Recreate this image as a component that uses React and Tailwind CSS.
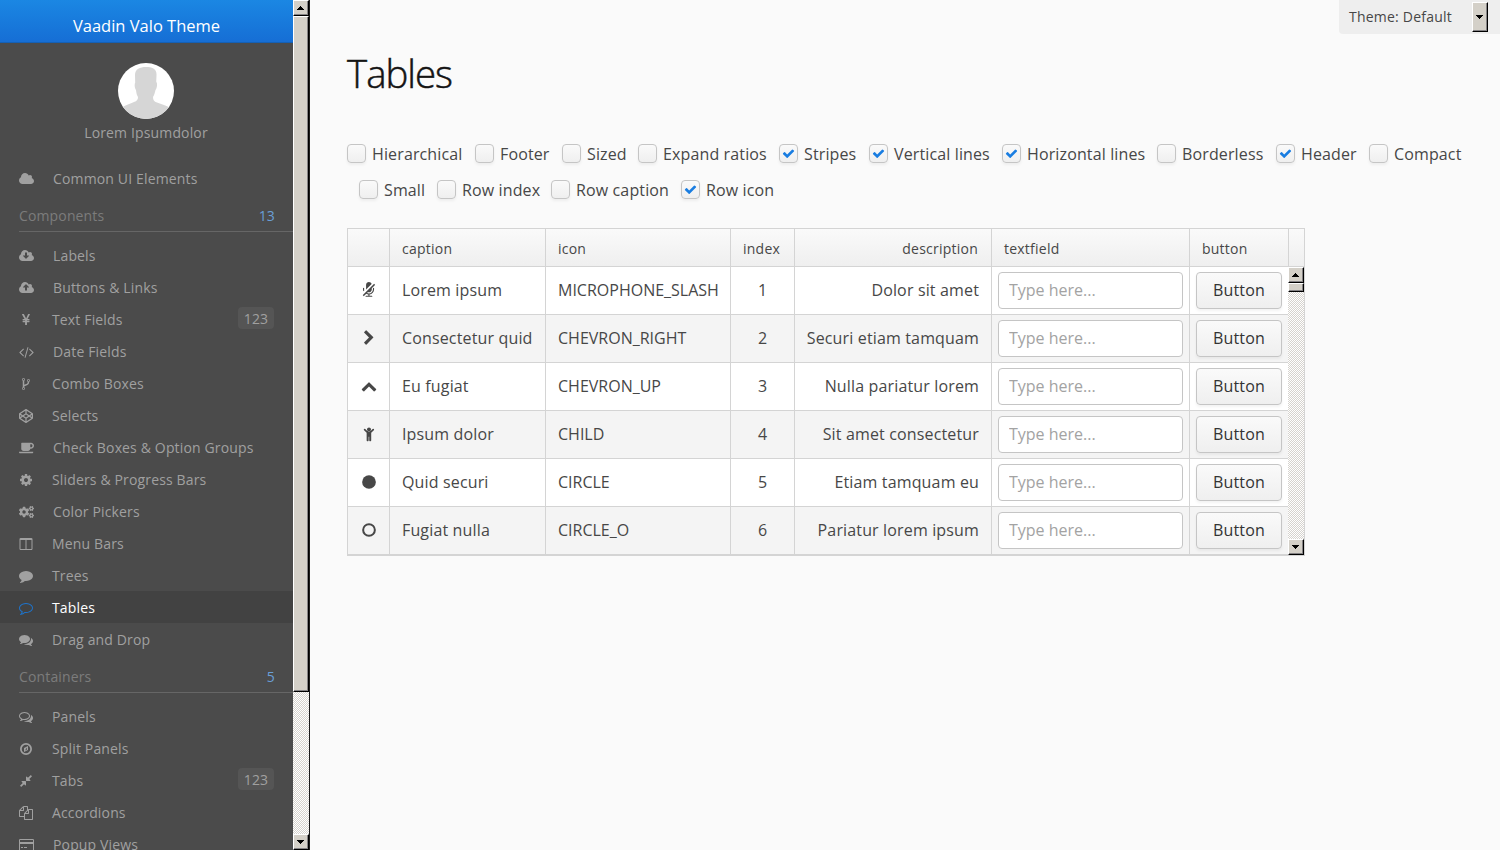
import React from "react";
import { FaCogs, FaCodepen, FaCoffee } from "react-icons/fa";

const CLOUD =
  "q0 159-112.5 271.5t-271.5 112.5h-1088q-185 0-316.5-131.5t-131.5-316.5q0-132 71-241.5t187-163.5q-2-28-2-43 0-212 150-362t362-150q158 0 286.5 88t187.5 230q70-62 166-62 106 0 181 75t75 181q0 75-41 138 129 30 213 134.5t84 239.5z";

const paths = {
  cloud: "M1984 1152" + CLOUD,
  cloudDown:
    "M1344 864q0-14-9-23t-23-9h-224v-352q0-13-9.5-22.5t-22.5-9.5h-192q-13 0-22.5 9.5t-9.5 22.5v352h-224q-13 0-22.5 9.5t-9.5 22.5q0 14 9 23l352 352q9 9 23 9t23-9l351-351q10-12 10-24zM1984 1152" + CLOUD,
  cloudUp:
    "M1344 800q0-14-9-23l-352-352q-9-9-23-9t-23 9l-351 351q-10 12-10 24 0 14 9 23t23 9h224v352q0 13 9.5 22.5t22.5 9.5h192q13 0 22.5-9.5t9.5-22.5v-352h224q13 0 22.5-9.5t9.5-22.5zM1984 1152" + CLOUD,
  yen: "M985.5 1536h-172q-13 0-22.5-9t-9.5-23v-330h-288q-13 0-22.5-9t-9.5-23v-103q0-13 9.5-22.5t22.5-9.5h288v-85h-288q-13 0-22.5-9t-9.5-23v-104q0-13 9.5-22.5t22.5-9.5h214l-321-578q-8-16 0-32 10-16 28-16h194q19 0 29 18l215 425q19 38 56 125 10-24 30.5-68t27.5-61l191-420q8-19 29-19h191q17 0 27 16 9 14 1 31l-313 579h215q13 0 22.5 9.5t9.5 22.5v104q0 14-9.5 23t-22.5 9h-290v85h290q13 0 22.5 9.5t9.5 22.5v103q0 14-9.5 23t-22.5 9h-290v330q0 13-9.5 22.5t-22.5 9.5z",
  code: "M681 1399l-50 50q-10 10-23 10t-23-10l-466-466q-10-10-10-23t10-23l466-466q10-10 23-10t23 10l50 50q10 10 10 23t-10 23l-393 393 393 393q10 10 10 23t-10 23zm591-1067l-373 1291q-4 13-15.5 19.5t-23.5 2.5l-62-17q-13-4-19.5-15.5t-2.5-24.5l373-1291q4-13 15.5-19.5t23.5-2.5l62 17q13 4 19.5 15.5t2.5 24.5zm657 651l-466 466q-10 10-23 10t-23-10l-50-50q-10-10-10-23t10-23l393-393-393-393q-10-10-10-23t10-23l50-50q10-10 23-10t23 10l466 466q10 10 10 23t-10 23z",
  fork: "M672 1472q0-40-28-68t-68-28-68 28-28 68 28 68 68 28 68-28 28-68zm0-1152q0-40-28-68t-68-28-68 28-28 68 28 68 68 28 68-28 28-68zm640 128q0-40-28-68t-68-28-68 28-28 68 28 68 68 28 68-28 28-68zm96 0q0 52-26 96.5t-70 69.5q-2 287-226 414-67 38-203 81-128 40-169.5 71t-41.5 100v26q44 25 70 69.5t26 96.5q0 80-56 136t-136 56-136-56-56-136q0-52 26-96.5t70-69.5v-820q-44-25-70-69.5t-26-96.5q0-80 56-136t136-56 136 56 56 136q0 52-26 96.5t-70 69.5v497q54-26 154-57 55-17 87.5-29.5t70.5-31 59-39.5 40.5-51 28-69.5 8.5-91.5q-44-25-70-69.5t-26-96.5q0-80 56-136t136-56 136 56 56 136z",
  cog: "M1152 896q0-106-75-181t-181-75-181 75-75 181 75 181 181 75 181-75 75-181zm512-109v222q0 12-8 23t-20 13l-185 28q-19 54-39 91 35 50 107 138 10 12 10 25t-9 23q-27 37-99 108t-94 71q-12 0-26-9l-138-108q-44 23-91 38-16 136-29 186-7 28-36 28h-222q-14 0-24.5-8.5t-11.5-21.5l-28-184q-49-16-90-37l-141 107q-10 9-25 9-14 0-25-11-126-114-165-168-7-10-7-23 0-12 8-23 15-21 51-66.5t54-70.5q-27-50-41-99l-183-27q-13-2-21-12.5t-8-23.5v-222q0-12 8-23t19-13l186-28q14-46 39-92-40-57-107-138-10-12-10-24 0-10 9-23 26-36 98.5-107.5t94.5-71.5q13 0 26 10l138 107q44-23 91-38 16-136 29-186 7-28 36-28h222q14 0 24.5 8.5t11.5 21.5l28 184q49 16 90 37l142-107q9-9 24-9 13 0 25 10 129 119 165 170 7 8 7 22 0 12-8 23-15 21-51 66.5t-54 70.5q26 50 41 98l183 28q13 2 21 12.5t8 23.5z",
  columns:
    "M224 1536h608v-1152h-640v1120q0 13 9.5 22.5t22.5 9.5zm1376-32v-1120h-640v1152h608q13 0 22.5-9.5t9.5-22.5zm128-1216v1216q0 66-47 113t-113 47h-1344q-66 0-113-47t-47-113v-1216q0-66 47-113t113-47h1344q66 0 113 47t47 113z",
  comment:
    "M1792 896q0 174-120 321.5t-326 233-450 85.5q-70 0-145-8-198 175-460 242-49 14-114 22-17 2-30.5-9t-17.5-29v-1q-3-4-.5-12t2-10 4.5-9.5l6-9 7-8.5 8-9q7-8 31-34.5t34.5-38 31-39.5 32.5-51 27-59 26-76q-157-89-247.5-220t-90.5-281q0-130 71-248.5t191-204.5 286-136.5 348-50.5q244 0 450 85.5t326 233 120 321.5z",
  commentO:
    "M896 384q-204 0-381.5 69.5t-282 187.5-104.5 255q0 112 71.5 213.5t201.5 175.5l87 50-27 96q-24 91-70 172 152-63 275-171l43-38 57 6q69 8 130 8 204 0 381.5-69.5t282-187.5 104.5-255-104.5-255-282-187.5-381.5-69.5zm896 512q0 174-120 321.5t-326 233-450 85.5q-70 0-145-8-198 175-460 242-49 14-114 22h-5q-15 0-27-10.5t-16-27.5v-1q-3-4-.5-12t2-10 4.5-9.5l6-9 7-8.5 8-9q7-8 31-34.5t34.5-38 31-39.5 32.5-51 27-59 26-76q-157-89-247.5-220t-90.5-281q0-174 120-321.5t326-233 450-85.5 450 85.5 326 233 120 321.5z",
  comments:
    "M1408 768q0 139-94 257t-256.5 186.5-353.5 68.5q-86 0-176-16-124 88-278 128-36 9-86 16h-3q-11 0-20.5-8t-11.5-21q-1-3-1-6.5t.5-6.5 2-6l2.5-5 3.5-5.5 4-5 4.5-5 4-4.5q5-6 23-25t26-29.5 22.5-29 25-38.5 20.5-44q-124-72-195-177t-71-224q0-139 94-257t256.5-186.5 353.5-68.5 353.5 68.5 256.5 186.5 94 257zm384 256q0 120-71 224.5t-195 176.5q10 24 20.5 44t25 38.5 22.5 29 26 29.5 23 25q1 1 4 4.5t4.5 5 4 5 3.5 5.5l2.5 5 2 6 .5 6.5-1 6.5q-3 14-13 22t-22 7q-50-7-86-16-154-40-278-128-90 16-176 16-271 0-472-132 58 4 88 4 161 0 309-45t264-129q125-92 192-212t67-254q0-77-23-152 129 71 204 178t75 230z",
  commentsO:
    "M704 384q-153 0-286 52t-211.5 141-78.5 191q0 82 53 158t149 132l97 56-35 84q34-20 62-39l44-31 53 10q78 14 153 14 153 0 286-52t211.5-141 78.5-191-78.5-191-211.5-141-286-52zm0-128q191 0 353.5 68.5t256.5 186.5 94 257-94 257-256.5 186.5-353.5 68.5q-86 0-176-16-124 88-278 128-36 9-86 16h-3q-11 0-20.5-8t-11.5-21q-1-3-1-6.5t.5-6.5 2-6l2.5-5 3.5-5.5 4-5 4.5-5 4-4.5q5-6 23-25t26-29.5 22.5-29 25-38.5 20.5-44q-124-72-195-177t-71-224q0-139 94-257t256.5-186.5 353.5-68.5zm822 1169q10 24 20.5 44t25 38.5 22.5 29 26 29.5 23 25q1 1 4 4.5t4.5 5 4 5 3.5 5.5l2.5 5 2 6 .5 6.5-1 6.5q-3 14-13 22t-22 7q-50-7-86-16-154-40-278-128-90 16-176 16-271 0-472-132 58 4 88 4 161 0 309-45t264-129q125-92 192-212t67-254q0-77-23-152 129 71 204 178t75 230q0 120-71 224.5t-195 176.5z",
  compass:
    "M896 128a768 768 0 1 0 0 1536a768 768 0 1 0 0-1536zm0 224a544 544 0 1 1 0 1088a544 544 0 1 1 0-1088zM1152 512v512l-512 256v-512zM768 1074l256-128v-256z",
  compress:
    "M896 960v448q0 26-19 45t-45 19-45-19l-144-144-332 332q-10 10-23 10t-23-10l-114-114q-10-10-10-23t10-23l332-332-144-144q-19-19-19-45t19-45 45-19h448q26 0 45 19t19 45zm755-672q0 13-10 23l-332 332 144 144q19 19 19 45t-19 45-45 19h-448q-26 0-45-19t-19-45v-448q0-26 19-45t45-19 45 19l144 144 332-332q10-10 23-10t23 10l114 114q10 10 10 23z",
  copy: "M1696 384q40 0 68 28t28 68v1216q0 40-28 68t-68 28h-960q-40 0-68-28t-28-68v-288h-544q-40 0-68-28t-28-68v-672q0-40 20-88t48-76l408-408q28-28 76-48t88-20h416q40 0 68 28t28 68v328q68-40 128-40h416zm-544 213l-299 299h299v-299zm-640-384l-299 299h299v-299zm196 647l316-316v-416h-384v416q0 40-28 68t-68 28h-416v640h512v-256q0-40 20-88t48-76zm956 804v-1152h-384v416q0 40-28 68t-68 28h-416v640h896z",
  card: "M160 128h1600q66 0 113 47t47 113v1216q0 66-47 113t-113 47h-1600q-66 0-113-47t-47-113v-1216q0-66 47-113t113-47zM128 256v256h1664v-256zM128 768v768h1664v-768zM256 1152h256v128h-256zM640 1152h384v128h-384z",
  micSlash:
    "M367 947l-101 101q-42-103-42-216v-128q0-26 19-45t45-19 45 19 19 45v128q0 53 15 115zm1202-602l-361 361v126q0 132-94 226t-226 94q-55 0-109-19l-96 96q97 51 205 51 185 0 316.5-131.5t131.5-316.5v-128q0-26 19-45t45-19 45 19 19 45v128q0 221-147.5 384.5t-364.5 187.5v132h256q26 0 45 19t19 45-19 45-45 19h-640q-26 0-45-19t-19-45 19-45 45-19h256v-132q-125-13-235-81l-254 254q-10 10-23 10t-23-10l-82-82q-10-10-10-23t10-23l1234-1234q10-10 23-10t23 10l82 82q10 10 10 23t-10 23zm-380-132l-621 621v-512q0-132 94-226t226-94q102 0 184.5 59t116.5 152z",
  chevronRight:
    "M1363 877l-742 742q-19 19-45 19t-45-19l-166-166q-19-19-19-45t19-45l531-531-531-531q-19-19-19-45t19-45l166-166q19-19 45-19t45 19l742 742q19 19 19 45t-19 45z",
  chevronUp:
    "M1683 1331l-166 165q-19 19-45 19t-45-19l-531-531-531 531q-19 19-45 19t-45-19l-166-165q-19-19-19-45.5t19-45.5l742-741q19-19 45-19t45 19l742 741q19 19 19 45.5t-19 45.5z",
  child:
    "M1436 476l-292 292v824q0 46-33 79t-79 33-79-33-33-79v-384h-64v384q0 46-33 79t-79 33-79-33-33-79v-824l-292-292q-28-28-28-68t28-68 68-28 68 28l228 228h368l228-228q28-28 68-28t68 28 28 68-28 68zm-316-92q0 93-65.5 158.5t-158.5 65.5-158.5-65.5-65.5-158.5 65.5-158.5 158.5-65.5 158.5 65.5 65.5 158.5z",
  circle: "M896 128a768 768 0 1 0 0 1536a768 768 0 1 0 0-1536z",
  circleO:
    "M896 128a768 768 0 1 0 0 1536a768 768 0 1 0 0-1536zm0 224a544 544 0 1 1 0 1088a544 544 0 1 1 0-1088z",
  check:
    "M1671 566q0 40-28 68l-724 724-136 136q-28 28-68 28t-68-28l-136-136-362-362q-28-28-28-68t28-68l136-136q28-28 68-28t68 28l294 295 656-657q28-28 68-28t68 28l136 136q28 28 28 68z",
};

function Glyph({ name, box = "0 0 1792 1792", className }) {
  return (
    <svg viewBox={box} className={className} fill="currentColor" fillRule="evenodd">
      <path d={paths[name]} />
    </svg>
  );
}

const std = (name) => <Glyph name={name} className="size-[14px]" />;
const wide = (name) => <Glyph name={name} box="64 0 1920 1792" className="h-[14px] w-[15px]" />;

const mainItems = [
  { label: "Labels", icon: wide("cloudDown"), wide: true },
  { label: "Buttons & Links", icon: wide("cloudUp"), wide: true },
  { label: "Text Fields", icon: std("yen"), badge: "123" },
  { label: "Date Fields", icon: wide("code"), wide: true },
  { label: "Combo Boxes", icon: std("fork") },
  { label: "Selects", icon: <FaCodepen className="size-[14px]" /> },
  { label: "Check Boxes & Option Groups", icon: <FaCoffee className="h-[14px] w-[15px]" />, wide: true },
  { label: "Sliders & Progress Bars", icon: std("cog") },
  { label: "Color Pickers", icon: <FaCogs className="h-[14px] w-[15px]" />, wide: true },
  { label: "Menu Bars", icon: <Glyph name="columns" className="size-[14px]" /> },
  { label: "Trees", icon: std("comment") },
  { label: "Tables", icon: std("commentO"), active: true },
  { label: "Drag and Drop", icon: std("comments") },
];

const containerItems = [
  { label: "Panels", icon: std("commentsO") },
  { label: "Split Panels", icon: std("compass") },
  { label: "Tabs", icon: std("compress"), badge: "123" },
  { label: "Accordions", icon: std("copy") },
  { label: "Popup Views", icon: <Glyph name="card" box="0 0 1920 1792" className="h-[14px] w-[15px]" />, wide: true },
];

function MenuItem({ item }) {
  return (
    <div
      className={
        "flex h-8 shrink-0 items-center pr-[19px] pl-[19px] text-[14px] tracking-[0.15px] " +
        (item.active ? "bg-[#424242] text-white" : "text-[#a0a0a0]")
      }
    >
      <span className={"mt-[2px] flex w-[15px] shrink-0 " + (item.active ? "text-[#1f73c9]" : "")}>{item.icon}</span>
      <span className={item.wide ? "ml-[19px]" : "ml-[18px]"}>{item.label}</span>
      {item.badge && (
        <span className="mb-[3px] ml-auto flex h-[22px] w-9 items-center justify-center rounded-[4px] bg-[#555555] pt-[2px]">
          {item.badge}
        </span>
      )}
    </div>
  );
}

function Section({ title, count }) {
  return (
    <div className="mt-px mb-[7px] ml-[19px] flex h-[37px] shrink-0 items-center justify-between border-b border-[#666666] pt-[5px] pr-[18px] text-[14px] tracking-[0.14px] text-[#7c7c7c]">
      <span>{title}</span>
      <span className="text-[#6a9fd6]">{count}</span>
    </div>
  );
}

const CHECKER = "bg-[conic-gradient(#fff_25%,#d6d3ce_0_50%,#fff_0_75%,#d6d3ce_0)] bg-[length:2px_2px]";
const BEVEL =
  "border border-t-white border-l-white border-r-black border-b-black bg-[#d4d0c8] shadow-[inset_-1px_-1px_0_#848284]";

function Arrow({ up = false }) {
  return (
    <svg viewBox="0 0 7 4" className="mr-px h-[4px] w-[7px]" shapeRendering="crispEdges">
      <path d={up ? "M3 0h1v1h1v1h1v1h1v1H0V3h1V2h1V1h1z" : "M0 0h7v1H6v1H5v1H4v1H3V3H2V2H1V1H0z"} />
    </svg>
  );
}

function ScrollBar({ thumb }) {
  return (
    <div className={"flex w-4 shrink-0 flex-col " + CHECKER}>
      <div className={"flex h-4 shrink-0 items-center justify-center " + BEVEL}>
        <Arrow up />
      </div>
      <div className={"shrink-0 " + thumb + " " + BEVEL} />
      <div className={"mt-auto flex h-4 shrink-0 items-center justify-center " + BEVEL}>
        <Arrow />
      </div>
    </div>
  );
}

const options = [
  [
    ["Hierarchical", 0, "w-[128px]"],
    ["Footer", 0, "w-[87px]"],
    ["Sized", 0, "w-[76px]"],
    ["Expand ratios", 0, "w-[141px]"],
    ["Stripes", 1, "w-[90px]"],
    ["Vertical lines", 1, "w-[133px]"],
    ["Horizontal lines", 1, "w-[155px]"],
    ["Borderless", 0, "w-[119px]"],
    ["Header", 1, "w-[93px]"],
    ["Compact", 0, "w-[100px]"],
  ],
  [
    ["Small", 0, "w-[78px]"],
    ["Row index", 0, "w-[114px]"],
    ["Row caption", 0, "w-[130px]"],
    ["Row icon", 1, "w-[100px]"],
  ],
];

function Check({ label, on, width }) {
  return (
    <label className={"flex h-9 shrink-0 items-center tracking-[0.13px] whitespace-nowrap " + width}>
      <span className="mr-[6px] mb-px flex size-[19px] shrink-0 items-center justify-center rounded-[4px] border border-[#c5c5c5] bg-linear-to-b from-[#fafafa] to-[#efefef] shadow-[0_2px_3px_rgba(0,0,0,0.05)]">
        {on ? <Glyph name="check" className="size-[13px] text-[#197de1]" /> : null}
      </span>
      {label}
    </label>
  );
}

const rows = [
  ["micSlash", "Lorem ipsum", "MICROPHONE_SLASH", "Dolor sit amet"],
  ["chevronRight", "Consectetur quid", "CHEVRON_RIGHT", "Securi etiam tamquam"],
  ["chevronUp", "Eu fugiat", "CHEVRON_UP", "Nulla pariatur lorem"],
  ["child", "Ipsum dolor", "CHILD", "Sit amet consectetur"],
  ["circle", "Quid securi", "CIRCLE", "Etiam tamquam eu"],
  ["circleO", "Fugiat nulla", "CIRCLE_O", "Pariatur lorem ipsum"],
];

const COLS = "grid grid-cols-[42px_156px_185px_64px_197px_198px_1fr]";
const HEAD = "flex items-center border-r border-[#d4d4d4] pl-3 pt-[2px] tracking-[0.23px] whitespace-nowrap";
const CELL = "flex items-center border-r border-[#d4d4d4] px-3 pb-[2px] whitespace-nowrap";

export default function App() {
  return (
    <div className="flex h-[850px] w-[1500px] overflow-hidden bg-[#fafafa] font-['Open_Sans',sans-serif] text-[16px] text-[#474747]">
      <aside className="flex w-[310px] shrink-0 border-r border-[#1c1c1c]">
        <div className="flex w-[293px] shrink-0 flex-col overflow-hidden bg-[#4b4b4b]">
          <div className="flex h-[43px] shrink-0 items-center justify-center border-b border-[#1560b4] bg-linear-to-b from-[#1b87e3] to-[#166ed5] pt-[11px] text-[16.5px] text-white">
            Vaadin Valo Theme
          </div>
          <div className="flex h-[119px] shrink-0 flex-col items-center pt-5 pr-px text-[14px] tracking-[0.14px] text-[#a0a0a0]">
            <svg viewBox="0 0 56 56" className="size-14 rounded-full bg-white">
              <path
                fill="#d6d6d6"
                d="M17 12C17 6 22 4 28 4s11 2 10.500 8c0 3-.3 5-.2 7 1.200 1 1 6-.8 8-.6 2-1 5-2.500 7 0 3 1 4.500 4 5.500 6 2.300 10 3.500 13 5.500V58H4V44.500c3-2 7-3.200 12-5.500 3-1 4-2.500 4-5-1.200-2-1.700-4-2-7-1.500-2-1.700-6-.8-7.500z"
              />
            </svg>
            <div className="mt-[3px]">Lorem Ipsumdolor</div>
          </div>
          <MenuItem item={{ label: "Common UI Elements", icon: wide("cloud"), wide: true }} />
          <Section title="Components" count="13" />
          {mainItems.map((item) => (
            <MenuItem key={item.label} item={item} />
          ))}
          <Section title="Containers" count="5" />
          {containerItems.map((item) => (
            <MenuItem key={item.label} item={item} />
          ))}
        </div>
        <ScrollBar thumb="h-[676px]" />
      </aside>

      <main className="flex min-w-0 flex-1 flex-col pl-[37px]">
        <div className="flex h-[34px] w-[161px] shrink-0 items-center self-end rounded-bl-[4px] bg-[#eeeeee] pr-3 pl-[10px] text-[14px]">
          <span className="pb-[2px] tracking-[0.22px]">Theme: Default</span>
          <span className={"ml-auto flex h-[30px] w-4 items-center justify-center " + BEVEL}>
            <Arrow />
          </span>
        </div>
        <h1 className="mt-[13px] h-[89px] text-[38.4px] leading-[52px] font-light tracking-[-1px] text-[#141414] [-webkit-text-stroke:0.5px_#141414]">
          Tables
        </h1>
        <div className="flex flex-col">
          {options.map((line, i) => (
            <div key={i} className={i ? "flex pl-3" : "flex"}>
              {line.map(([label, on, width]) => (
                <Check key={label} label={label} on={on} width={width} />
              ))}
            </div>
          ))}
        </div>

        <div className="mt-5 w-[958px] border border-[#d4d4d4] bg-white">
          <div className="flex h-[38px] border-b border-[#d4d4d4] bg-linear-to-b from-[#fafafa] to-[#efefef] text-[14px]">
            <div className={COLS + " w-[941px]"}>
              <div className="border-r border-[#d4d4d4]" />
              <div className={HEAD}>caption</div>
              <div className={HEAD}>icon</div>
              <div className={HEAD}>index</div>
              <div className={HEAD + " justify-end pr-[13px]"}>description</div>
              <div className={HEAD}>textfield</div>
              <div className={HEAD}>button</div>
            </div>
          </div>
          <div className="flex">
            <div className="w-[940px]">
              {rows.map(([icon, caption, name, description], i) => (
                <div
                  key={icon}
                  className={COLS + " h-12 border-b border-[#d4d4d4] " + (i % 2 ? "bg-[#f4f4f4]" : "bg-white")}
                >
                  <div className="flex items-center border-r border-[#d4d4d4] pb-px pl-[13px]">
                    <Glyph name={icon} className="size-4" />
                  </div>
                  <div className={CELL + " tracking-[0.15px]"}>{caption}</div>
                  <div className={CELL}>{name}</div>
                  <div className={CELL + " justify-center"}>{i + 1}</div>
                  <div className={CELL + " justify-end tracking-[0.15px]"}>{description}</div>
                  <div className="flex items-center border-r border-[#d4d4d4] px-[6px]">
                    <input
                      placeholder="Type here..."
                      className="h-[37px] w-[185px] rounded-[4px] border border-[#c5c5c5] bg-white px-[10px] pb-[2px] placeholder:text-[#a3a3a3]"
                    />
                  </div>
                  <div className="flex items-center px-[6px]">
                    <button className="h-[37px] w-[86px] rounded-[4px] border border-[#c5c5c5] bg-linear-to-b from-[#fafafa] to-[#efefef] pb-[2px] tracking-[0.2px] text-[#333333] shadow-[0_2px_3px_rgba(0,0,0,0.05)]">
                      Button
                    </button>
                  </div>
                </div>
              ))}
            </div>
            <ScrollBar thumb="h-[9px]" />
          </div>
        </div>
      </main>
    </div>
  );
}
